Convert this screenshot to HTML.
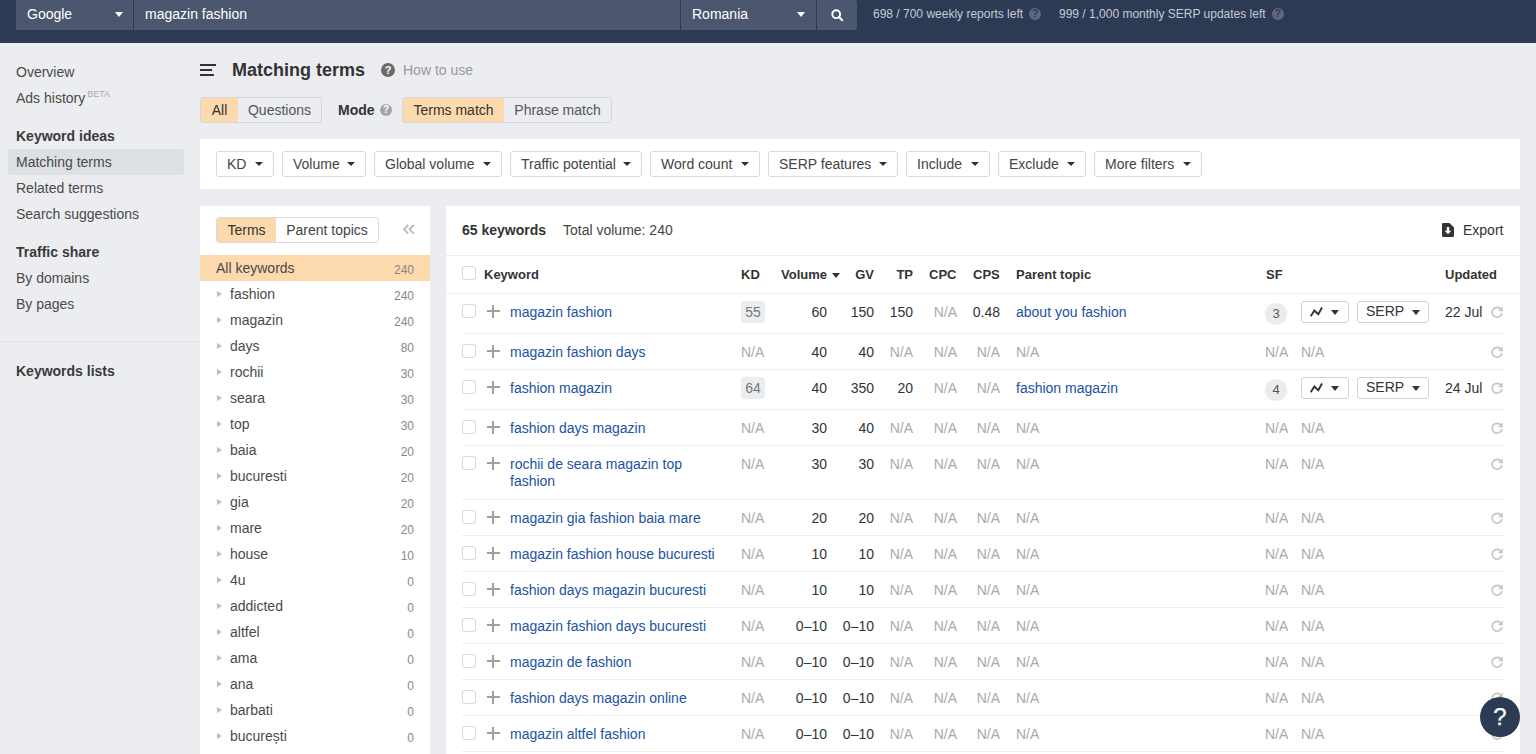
<!DOCTYPE html>
<html><head><meta charset="utf-8">
<style>
*{box-sizing:border-box;margin:0;padding:0}
html,body{width:1536px;height:754px;overflow:hidden}
body{font-family:"Liberation Sans",sans-serif;background:#ebedf0;position:relative;color:#333;font-size:14px}
.abs{position:absolute}
#top{position:absolute;left:0;top:0;width:1536px;height:43px;background:#2d3a54}
.tb{position:absolute;top:0;height:30px;background:#4c576f;color:#fff;font-size:14px;line-height:29px}
.caret{position:absolute;width:0;height:0;border-left:4px solid transparent;border-right:4px solid transparent;border-top:5px solid #fff}
.stat{position:absolute;top:0;height:30px;line-height:29px;font-size:12px;color:#c5cad4}
.qi{display:inline-block;width:12px;height:12px;border-radius:50%;background:#5d6880;color:#2d3a54;font-size:10px;line-height:12px;text-align:center;font-weight:bold;vertical-align:1px;margin-left:3px}
.side{position:absolute;left:16px;font-size:14px;color:#4a4a4a;line-height:16px}
.sideb{font-weight:bold;color:#3a3a3a}

.h1{position:absolute;left:232px;top:60px;font-size:18px;font-weight:bold;color:#333;line-height:20px}
.qd{position:absolute;border-radius:50%;color:#fff;font-weight:bold;text-align:center}
.seg{position:absolute;height:26px;border:1px solid #d3d6db;border-radius:3px;overflow:hidden;display:flex;font-size:14px;line-height:24px;color:#555}
.seg div{padding:0 0;text-align:center}
.seg .on{background:#fdd9ae;color:#333}
.panel{position:absolute;background:#fff}
.fb{position:absolute;top:151px;height:26px;border:1px solid #d7d9dd;border-radius:3px;font-size:14px;line-height:24px;color:#444;padding-left:10px;background:#fff}
.fb i{position:absolute;right:10px;top:10px;width:0;height:0;border-left:4px solid transparent;border-right:4px solid transparent;border-top:4px solid #333}
/*GENCSS*/
.tp{position:absolute;left:216px;font-size:14px;color:#4a4a4a;line-height:16px}
.tc{position:absolute;right:1122px;font-size:12px;color:#888;line-height:16px;text-align:right}
.tri{position:absolute;left:217px;width:0;height:0;border-top:3.5px solid transparent;border-bottom:3.5px solid transparent;border-left:5px solid #bdbdbd}
.rl{position:absolute;left:462px;width:1042px;height:1px;background:#eeeeee}
.cb{position:absolute;left:462px;width:14px;height:14px;border:1px solid #d9d9d9;border-radius:3px;background:#fff}
.pl{position:absolute;left:487px;width:13px;height:13px}
.pl:before{content:"";position:absolute;left:0;top:5px;width:13px;height:2px;background:#a0a0a0}
.pl:after{content:"";position:absolute;left:5px;top:0;width:2px;height:13px;background:#a0a0a0}
.t{position:absolute;font-size:14px;line-height:16px;white-space:nowrap;color:#333}
.lk{color:#2152a3}
.na{color:#aaa}
.r{text-align:right}
.hd{position:absolute;font-size:13px;font-weight:bold;color:#333;line-height:16px;top:267px}
.kdb{position:absolute;left:741px;width:24px;height:22px;background:#ebedf0;border-radius:3px;color:#777;font-size:14px;line-height:22px;text-align:center}
.sfb{position:absolute;left:1265px;width:22px;height:22px;background:#ececec;border-radius:50%;color:#555;font-size:13px;line-height:22px;text-align:center}
.sb{position:absolute;height:22px;border:1px solid #d2d2d2;border-radius:3px;background:#fff;font-size:14px;line-height:19px;color:#333}
.sb i{position:absolute;top:7.5px;width:0;height:0;border-left:4px solid transparent;border-right:4px solid transparent;border-top:5px solid #333}
.rf{position:absolute;left:1491px;width:12px;height:12px}
/*ENDGENCSS*/</style></head><body>
<div id="top">
  <div class="tb" style="left:16px;width:117px;padding-left:11px">Google<span class="caret" style="left:99px;top:12px"></span></div>
  <div class="tb" style="left:134px;width:546px;padding-left:11px">magazin fashion</div>
  <div class="tb" style="left:681px;width:135px;padding-left:11px">Romania<span class="caret" style="left:116px;top:12px"></span></div>
  <div class="tb" style="left:817px;width:40px;border-radius:0 3px 3px 0"><svg class="abs" style="left:14px;top:9px" width="13" height="13" viewBox="0 0 13 13"><circle cx="5.2" cy="5.2" r="3.9" fill="none" stroke="#fff" stroke-width="1.9"/><path d="M8 8 L11.2 11.2" stroke="#fff" stroke-width="2" stroke-linecap="round"/></svg></div>
  <div class="stat" style="left:873px">698 / 700 weekly reports left <span class="qi">?</span></div>
  <div class="stat" style="left:1059px">999 / 1,000 monthly SERP updates left <span class="qi">?</span></div>
</div>

<!-- sidebar -->
<div class="side" style="top:64px">Overview</div>
<div class="side" style="top:86px">Ads history<sup style="font-size:9px;color:#aaa;vertical-align:6px;margin-left:2px">BETA</sup></div>
<div class="side sideb" style="top:128px">Keyword ideas</div>
<div class="abs" style="left:8px;top:149px;width:176px;height:26px;background:#dcdfe4;border-radius:3px"></div>
<div class="side" style="top:154px">Matching terms</div>
<div class="side" style="top:180px">Related terms</div>
<div class="side" style="top:206px">Search suggestions</div>
<div class="side sideb" style="top:244px">Traffic share</div>
<div class="side" style="top:270px">By domains</div>
<div class="side" style="top:296px">By pages</div>
<div class="abs" style="left:0;top:341px;width:200px;height:1px;background:#dfe1e5"></div>
<div class="side sideb" style="top:363px">Keywords lists</div>


<!-- main header -->
<div class="abs" style="left:200px;top:64px;width:16px;height:2px;background:#333"></div>
<div class="abs" style="left:200px;top:69px;width:12px;height:2px;background:#333"></div>
<div class="abs" style="left:200px;top:74px;width:14px;height:2px;background:#333"></div>
<div class="h1">Matching terms</div>
<div class="qd" style="left:381px;top:63px;width:14px;height:14px;background:#6b6b6b;font-size:11px;line-height:14px">?</div>
<div class="abs" style="left:403px;top:62px;font-size:14px;color:#999;line-height:16px">How to use</div>

<div class="seg" style="left:200px;top:97px;width:122px"><div class="on" style="width:37px">All</div><div style="flex:1">Questions</div></div>
<div class="abs" style="left:338px;top:102px;font-size:14px;font-weight:bold;color:#333;line-height:16px">Mode</div>
<div class="qd" style="left:380px;top:104px;width:12px;height:12px;background:#a6a6a6;font-size:10px;line-height:12px">?</div>
<div class="seg" style="left:402px;top:97px;width:210px"><div class="on" style="width:101px">Terms match</div><div style="flex:1">Phrase match</div></div>

<!-- filter panel -->
<div class="panel" style="left:200px;top:139px;width:1320px;height:50px"></div>
<div class="fb" style="left:216px;width:58px">KD<i></i></div>
<div class="fb" style="left:282px;width:84px">Volume<i></i></div>
<div class="fb" style="left:374px;width:128px">Global volume<i></i></div>
<div class="fb" style="left:510px;width:132px">Traffic potential<i></i></div>
<div class="fb" style="left:650px;width:110px">Word count<i></i></div>
<div class="fb" style="left:768px;width:130px">SERP features<i></i></div>
<div class="fb" style="left:906px;width:84px">Include<i></i></div>
<div class="fb" style="left:998px;width:88px">Exclude<i></i></div>
<div class="fb" style="left:1094px;width:108px">More filters<i></i></div>
<!--GEN-->
<div class="panel" style="left:200px;top:206px;width:230px;height:548px"></div>
<div class="seg" style="left:216px;top:217px;width:163px;background:#fff;border-color:#d7d9dd"><div class="on" style="width:59px">Terms</div><div style="flex:1;color:#444">Parent topics</div></div>
<svg class="abs" style="left:403px;top:224px" width="12" height="11" viewBox="0 0 12 11"><path d="M5.3 1 L1 5.3 L5.3 9.6 M10.8 1 L6.5 5.3 L10.8 9.6" fill="none" stroke="#bbb" stroke-width="1.8"/></svg>
<div class="abs" style="left:200px;top:255px;width:230px;height:26px;background:#fdd9ae"></div>
<div class="tp" style="top:260px">All keywords</div><div class="tc" style="top:262px;right:1122px">240</div>
<div class="tri" style="top:291px"></div><div class="tp" style="left:230px;top:286px">fashion</div><div class="tc" style="top:288px">240</div>
<div class="tri" style="top:317px"></div><div class="tp" style="left:230px;top:312px">magazin</div><div class="tc" style="top:314px">240</div>
<div class="tri" style="top:343px"></div><div class="tp" style="left:230px;top:338px">days</div><div class="tc" style="top:340px">80</div>
<div class="tri" style="top:369px"></div><div class="tp" style="left:230px;top:364px">rochii</div><div class="tc" style="top:366px">30</div>
<div class="tri" style="top:395px"></div><div class="tp" style="left:230px;top:390px">seara</div><div class="tc" style="top:392px">30</div>
<div class="tri" style="top:421px"></div><div class="tp" style="left:230px;top:416px">top</div><div class="tc" style="top:418px">30</div>
<div class="tri" style="top:447px"></div><div class="tp" style="left:230px;top:442px">baia</div><div class="tc" style="top:444px">20</div>
<div class="tri" style="top:473px"></div><div class="tp" style="left:230px;top:468px">bucuresti</div><div class="tc" style="top:470px">20</div>
<div class="tri" style="top:499px"></div><div class="tp" style="left:230px;top:494px">gia</div><div class="tc" style="top:496px">20</div>
<div class="tri" style="top:525px"></div><div class="tp" style="left:230px;top:520px">mare</div><div class="tc" style="top:522px">20</div>
<div class="tri" style="top:551px"></div><div class="tp" style="left:230px;top:546px">house</div><div class="tc" style="top:548px">10</div>
<div class="tri" style="top:577px"></div><div class="tp" style="left:230px;top:572px">4u</div><div class="tc" style="top:574px">0</div>
<div class="tri" style="top:603px"></div><div class="tp" style="left:230px;top:598px">addicted</div><div class="tc" style="top:600px">0</div>
<div class="tri" style="top:629px"></div><div class="tp" style="left:230px;top:624px">altfel</div><div class="tc" style="top:626px">0</div>
<div class="tri" style="top:655px"></div><div class="tp" style="left:230px;top:650px">ama</div><div class="tc" style="top:652px">0</div>
<div class="tri" style="top:681px"></div><div class="tp" style="left:230px;top:676px">ana</div><div class="tc" style="top:678px">0</div>
<div class="tri" style="top:707px"></div><div class="tp" style="left:230px;top:702px">barbati</div><div class="tc" style="top:704px">0</div>
<div class="tri" style="top:733px"></div><div class="tp" style="left:230px;top:728px">bucurești</div><div class="tc" style="top:730px">0</div>
<div class="panel" style="left:446px;top:206px;width:1074px;height:548px"></div>
<div class="t" style="left:462px;top:222px;font-weight:bold">65 keywords</div>
<div class="t" style="left:563px;top:222px;color:#444">Total volume: 240</div>
<svg class="abs" style="left:1442px;top:223px" width="12" height="14" viewBox="0 0 12 14"><path d="M1.2 0 H7.5 L12 4.5 V12.8 A1.2 1.2 0 0 1 10.8 14 H1.2 A1.2 1.2 0 0 1 0 12.8 V1.2 A1.2 1.2 0 0 1 1.2 0 Z" fill="#333"/><path d="M4.8 4 H7.2 V7.8 H9.3 L6 11.2 L2.7 7.8 H4.8 Z" fill="#fff"/></svg>
<div class="t" style="left:1463px;top:222px;color:#333">Export</div>
<div class="abs" style="left:446px;top:255px;width:1074px;height:1px;background:#eeeeee"></div>
<div class="abs" style="left:446px;top:293px;width:1074px;height:1px;background:#eeeeee"></div>
<div class="cb" style="top:266px"></div>
<div class="hd" style="left:484px">Keyword</div>
<div class="hd" style="left:741px">KD</div>
<div class="hd" style="left:781px">Volume</div>
<div class="hd" style="right:662px">GV</div>
<div class="hd" style="right:623px">TP</div>
<div class="hd" style="left:929px">CPC</div>
<div class="hd" style="left:973px">CPS</div>
<div class="hd" style="left:1016px">Parent topic</div>
<div class="hd" style="left:1266px">SF</div>
<div class="hd" style="left:1445px">Updated</div>
<div class="abs" style="left:832px;top:273px;width:0;height:0;border-left:4px solid transparent;border-right:4px solid transparent;border-top:5px solid #333"></div>
<div class="rl" style="top:333px"></div>
<div class="cb" style="top:304px"></div><div class="pl" style="top:305px"></div>
<div class="t lk" style="left:510px;top:304px">magazin fashion</div>
<div class="kdb" style="top:301px">55</div>
<div class="t r " style="right:709px;top:304px">60</div>
<div class="t r " style="right:662px;top:304px">150</div>
<div class="t r " style="right:623px;top:304px">150</div>
<div class="t r na" style="right:579px;top:304px">N/A</div>
<div class="t r " style="right:536px;top:304px">0.48</div>
<div class="t lk" style="left:1016px;top:304px">about you fashion</div>
<div class="sfb" style="top:303px">3</div>
<div class="sb" style="left:1301px;top:301px;width:48px"><svg class="abs" style="left:8px;top:5px" width="13" height="10" viewBox="0 0 13 10"><path d="M0.7 9.3 L4.3 3.5 L8.3 7.2 L12 0.5" fill="none" stroke="#333" stroke-width="1.9"/></svg><i style="left:29px"></i></div>
<div class="sb" style="left:1357px;top:301px;width:72px;padding-left:8px">SERP<i style="left:54px"></i></div>
<div class="t" style="left:1445px;top:304px">22 Jul</div>
<svg class="rf" style="top:306px" width="12" height="12" viewBox="0 0 12 12"><path d="M10 3.3 A4.9 4.9 0 1 0 10.9 7" fill="none" stroke="#c6c6c6" stroke-width="1.7"/><path d="M11.8 0.3 V5.2 H6.9 Z" fill="#c6c6c6"/></svg>
<div class="rl" style="top:369px"></div>
<div class="cb" style="top:344px"></div><div class="pl" style="top:345px"></div>
<div class="t lk" style="left:510px;top:344px">magazin fashion days</div>
<div class="t na" style="left:741px;top:344px">N/A</div>
<div class="t r " style="right:709px;top:344px">40</div>
<div class="t r " style="right:662px;top:344px">40</div>
<div class="t r na" style="right:623px;top:344px">N/A</div>
<div class="t r na" style="right:579px;top:344px">N/A</div>
<div class="t r na" style="right:536px;top:344px">N/A</div>
<div class="t na" style="left:1016px;top:344px">N/A</div>
<div class="t na" style="left:1265px;top:344px">N/A</div><div class="t na" style="left:1301px;top:344px">N/A</div>
<svg class="rf" style="top:346px" width="12" height="12" viewBox="0 0 12 12"><path d="M10 3.3 A4.9 4.9 0 1 0 10.9 7" fill="none" stroke="#c6c6c6" stroke-width="1.7"/><path d="M11.8 0.3 V5.2 H6.9 Z" fill="#c6c6c6"/></svg>
<div class="rl" style="top:409px"></div>
<div class="cb" style="top:380px"></div><div class="pl" style="top:381px"></div>
<div class="t lk" style="left:510px;top:380px">fashion magazin</div>
<div class="kdb" style="top:377px">64</div>
<div class="t r " style="right:709px;top:380px">40</div>
<div class="t r " style="right:662px;top:380px">350</div>
<div class="t r " style="right:623px;top:380px">20</div>
<div class="t r na" style="right:579px;top:380px">N/A</div>
<div class="t r na" style="right:536px;top:380px">N/A</div>
<div class="t lk" style="left:1016px;top:380px">fashion magazin</div>
<div class="sfb" style="top:379px">4</div>
<div class="sb" style="left:1301px;top:377px;width:48px"><svg class="abs" style="left:8px;top:5px" width="13" height="10" viewBox="0 0 13 10"><path d="M0.7 9.3 L4.3 3.5 L8.3 7.2 L12 0.5" fill="none" stroke="#333" stroke-width="1.9"/></svg><i style="left:29px"></i></div>
<div class="sb" style="left:1357px;top:377px;width:72px;padding-left:8px">SERP<i style="left:54px"></i></div>
<div class="t" style="left:1445px;top:380px">24 Jul</div>
<svg class="rf" style="top:382px" width="12" height="12" viewBox="0 0 12 12"><path d="M10 3.3 A4.9 4.9 0 1 0 10.9 7" fill="none" stroke="#c6c6c6" stroke-width="1.7"/><path d="M11.8 0.3 V5.2 H6.9 Z" fill="#c6c6c6"/></svg>
<div class="rl" style="top:445px"></div>
<div class="cb" style="top:420px"></div><div class="pl" style="top:421px"></div>
<div class="t lk" style="left:510px;top:420px">fashion days magazin</div>
<div class="t na" style="left:741px;top:420px">N/A</div>
<div class="t r " style="right:709px;top:420px">30</div>
<div class="t r " style="right:662px;top:420px">40</div>
<div class="t r na" style="right:623px;top:420px">N/A</div>
<div class="t r na" style="right:579px;top:420px">N/A</div>
<div class="t r na" style="right:536px;top:420px">N/A</div>
<div class="t na" style="left:1016px;top:420px">N/A</div>
<div class="t na" style="left:1265px;top:420px">N/A</div><div class="t na" style="left:1301px;top:420px">N/A</div>
<svg class="rf" style="top:422px" width="12" height="12" viewBox="0 0 12 12"><path d="M10 3.3 A4.9 4.9 0 1 0 10.9 7" fill="none" stroke="#c6c6c6" stroke-width="1.7"/><path d="M11.8 0.3 V5.2 H6.9 Z" fill="#c6c6c6"/></svg>
<div class="rl" style="top:499px"></div>
<div class="cb" style="top:456px"></div><div class="pl" style="top:457px"></div>
<div class="t lk" style="left:510px;top:456px">rochii de seara magazin top</div>
<div class="t lk" style="left:510px;top:473px">fashion</div>
<div class="t na" style="left:741px;top:456px">N/A</div>
<div class="t r " style="right:709px;top:456px">30</div>
<div class="t r " style="right:662px;top:456px">30</div>
<div class="t r na" style="right:623px;top:456px">N/A</div>
<div class="t r na" style="right:579px;top:456px">N/A</div>
<div class="t r na" style="right:536px;top:456px">N/A</div>
<div class="t na" style="left:1016px;top:456px">N/A</div>
<div class="t na" style="left:1265px;top:456px">N/A</div><div class="t na" style="left:1301px;top:456px">N/A</div>
<svg class="rf" style="top:458px" width="12" height="12" viewBox="0 0 12 12"><path d="M10 3.3 A4.9 4.9 0 1 0 10.9 7" fill="none" stroke="#c6c6c6" stroke-width="1.7"/><path d="M11.8 0.3 V5.2 H6.9 Z" fill="#c6c6c6"/></svg>
<div class="rl" style="top:535px"></div>
<div class="cb" style="top:510px"></div><div class="pl" style="top:511px"></div>
<div class="t lk" style="left:510px;top:510px">magazin gia fashion baia mare</div>
<div class="t na" style="left:741px;top:510px">N/A</div>
<div class="t r " style="right:709px;top:510px">20</div>
<div class="t r " style="right:662px;top:510px">20</div>
<div class="t r na" style="right:623px;top:510px">N/A</div>
<div class="t r na" style="right:579px;top:510px">N/A</div>
<div class="t r na" style="right:536px;top:510px">N/A</div>
<div class="t na" style="left:1016px;top:510px">N/A</div>
<div class="t na" style="left:1265px;top:510px">N/A</div><div class="t na" style="left:1301px;top:510px">N/A</div>
<svg class="rf" style="top:512px" width="12" height="12" viewBox="0 0 12 12"><path d="M10 3.3 A4.9 4.9 0 1 0 10.9 7" fill="none" stroke="#c6c6c6" stroke-width="1.7"/><path d="M11.8 0.3 V5.2 H6.9 Z" fill="#c6c6c6"/></svg>
<div class="rl" style="top:571px"></div>
<div class="cb" style="top:546px"></div><div class="pl" style="top:547px"></div>
<div class="t lk" style="left:510px;top:546px">magazin fashion house bucuresti</div>
<div class="t na" style="left:741px;top:546px">N/A</div>
<div class="t r " style="right:709px;top:546px">10</div>
<div class="t r " style="right:662px;top:546px">10</div>
<div class="t r na" style="right:623px;top:546px">N/A</div>
<div class="t r na" style="right:579px;top:546px">N/A</div>
<div class="t r na" style="right:536px;top:546px">N/A</div>
<div class="t na" style="left:1016px;top:546px">N/A</div>
<div class="t na" style="left:1265px;top:546px">N/A</div><div class="t na" style="left:1301px;top:546px">N/A</div>
<svg class="rf" style="top:548px" width="12" height="12" viewBox="0 0 12 12"><path d="M10 3.3 A4.9 4.9 0 1 0 10.9 7" fill="none" stroke="#c6c6c6" stroke-width="1.7"/><path d="M11.8 0.3 V5.2 H6.9 Z" fill="#c6c6c6"/></svg>
<div class="rl" style="top:607px"></div>
<div class="cb" style="top:582px"></div><div class="pl" style="top:583px"></div>
<div class="t lk" style="left:510px;top:582px">fashion days magazin bucuresti</div>
<div class="t na" style="left:741px;top:582px">N/A</div>
<div class="t r " style="right:709px;top:582px">10</div>
<div class="t r " style="right:662px;top:582px">10</div>
<div class="t r na" style="right:623px;top:582px">N/A</div>
<div class="t r na" style="right:579px;top:582px">N/A</div>
<div class="t r na" style="right:536px;top:582px">N/A</div>
<div class="t na" style="left:1016px;top:582px">N/A</div>
<div class="t na" style="left:1265px;top:582px">N/A</div><div class="t na" style="left:1301px;top:582px">N/A</div>
<svg class="rf" style="top:584px" width="12" height="12" viewBox="0 0 12 12"><path d="M10 3.3 A4.9 4.9 0 1 0 10.9 7" fill="none" stroke="#c6c6c6" stroke-width="1.7"/><path d="M11.8 0.3 V5.2 H6.9 Z" fill="#c6c6c6"/></svg>
<div class="rl" style="top:643px"></div>
<div class="cb" style="top:618px"></div><div class="pl" style="top:619px"></div>
<div class="t lk" style="left:510px;top:618px">magazin fashion days bucuresti</div>
<div class="t na" style="left:741px;top:618px">N/A</div>
<div class="t r " style="right:709px;top:618px">0–10</div>
<div class="t r " style="right:662px;top:618px">0–10</div>
<div class="t r na" style="right:623px;top:618px">N/A</div>
<div class="t r na" style="right:579px;top:618px">N/A</div>
<div class="t r na" style="right:536px;top:618px">N/A</div>
<div class="t na" style="left:1016px;top:618px">N/A</div>
<div class="t na" style="left:1265px;top:618px">N/A</div><div class="t na" style="left:1301px;top:618px">N/A</div>
<svg class="rf" style="top:620px" width="12" height="12" viewBox="0 0 12 12"><path d="M10 3.3 A4.9 4.9 0 1 0 10.9 7" fill="none" stroke="#c6c6c6" stroke-width="1.7"/><path d="M11.8 0.3 V5.2 H6.9 Z" fill="#c6c6c6"/></svg>
<div class="rl" style="top:679px"></div>
<div class="cb" style="top:654px"></div><div class="pl" style="top:655px"></div>
<div class="t lk" style="left:510px;top:654px">magazin de fashion</div>
<div class="t na" style="left:741px;top:654px">N/A</div>
<div class="t r " style="right:709px;top:654px">0–10</div>
<div class="t r " style="right:662px;top:654px">0–10</div>
<div class="t r na" style="right:623px;top:654px">N/A</div>
<div class="t r na" style="right:579px;top:654px">N/A</div>
<div class="t r na" style="right:536px;top:654px">N/A</div>
<div class="t na" style="left:1016px;top:654px">N/A</div>
<div class="t na" style="left:1265px;top:654px">N/A</div><div class="t na" style="left:1301px;top:654px">N/A</div>
<svg class="rf" style="top:656px" width="12" height="12" viewBox="0 0 12 12"><path d="M10 3.3 A4.9 4.9 0 1 0 10.9 7" fill="none" stroke="#c6c6c6" stroke-width="1.7"/><path d="M11.8 0.3 V5.2 H6.9 Z" fill="#c6c6c6"/></svg>
<div class="rl" style="top:715px"></div>
<div class="cb" style="top:690px"></div><div class="pl" style="top:691px"></div>
<div class="t lk" style="left:510px;top:690px">fashion days magazin online</div>
<div class="t na" style="left:741px;top:690px">N/A</div>
<div class="t r " style="right:709px;top:690px">0–10</div>
<div class="t r " style="right:662px;top:690px">0–10</div>
<div class="t r na" style="right:623px;top:690px">N/A</div>
<div class="t r na" style="right:579px;top:690px">N/A</div>
<div class="t r na" style="right:536px;top:690px">N/A</div>
<div class="t na" style="left:1016px;top:690px">N/A</div>
<div class="t na" style="left:1265px;top:690px">N/A</div><div class="t na" style="left:1301px;top:690px">N/A</div>
<svg class="rf" style="top:692px" width="12" height="12" viewBox="0 0 12 12"><path d="M10 3.3 A4.9 4.9 0 1 0 10.9 7" fill="none" stroke="#c6c6c6" stroke-width="1.7"/><path d="M11.8 0.3 V5.2 H6.9 Z" fill="#c6c6c6"/></svg>
<div class="rl" style="top:751px"></div>
<div class="cb" style="top:726px"></div><div class="pl" style="top:727px"></div>
<div class="t lk" style="left:510px;top:726px">magazin altfel fashion</div>
<div class="t na" style="left:741px;top:726px">N/A</div>
<div class="t r " style="right:709px;top:726px">0–10</div>
<div class="t r " style="right:662px;top:726px">0–10</div>
<div class="t r na" style="right:623px;top:726px">N/A</div>
<div class="t r na" style="right:579px;top:726px">N/A</div>
<div class="t r na" style="right:536px;top:726px">N/A</div>
<div class="t na" style="left:1016px;top:726px">N/A</div>
<div class="t na" style="left:1265px;top:726px">N/A</div><div class="t na" style="left:1301px;top:726px">N/A</div>
<svg class="rf" style="top:728px" width="12" height="12" viewBox="0 0 12 12"><path d="M10 3.3 A4.9 4.9 0 1 0 10.9 7" fill="none" stroke="#c6c6c6" stroke-width="1.7"/><path d="M11.8 0.3 V5.2 H6.9 Z" fill="#c6c6c6"/></svg>
<div class="qd" style="left:1480px;top:697px;width:40px;height:40px;background:#2d3a54;font-size:24px;line-height:40px;font-weight:normal;-webkit-text-stroke:0.25px #fff">?</div>
</body></html>
